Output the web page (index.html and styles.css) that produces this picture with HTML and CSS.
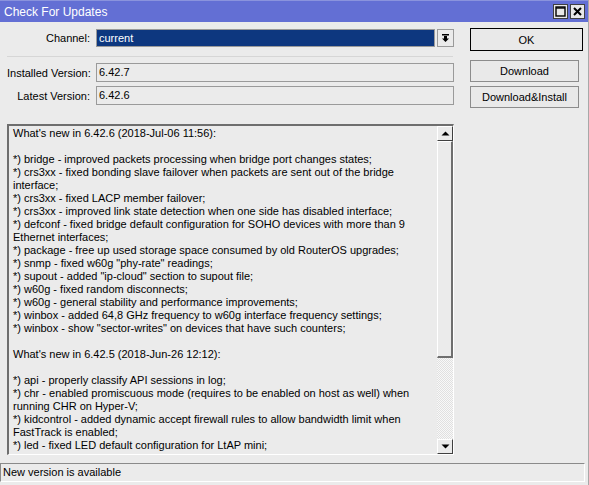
FILE: index.html
```html
<!DOCTYPE html>
<html lang="en">
<head>
    <meta charset="UTF-8">
    <title>Check For Updates</title>
    <link rel="stylesheet" href="styles.css">
</head>
<body>

<div class="window">
    <div class="titlebar">
        <span class="title">Check For Updates</span>
        <div class="title-btns">
            <span class="tbtn">
                <svg width="11" height="11" viewBox="0 0 11 11"><rect x="1" y="1" width="9" height="9" fill="none" stroke="#000" stroke-width="1.4"/><line x1="1" y1="2" x2="10" y2="2" stroke="#000" stroke-width="1.4"/></svg>
            </span>
            <span class="tbtn">
                <svg width="11" height="11" viewBox="0 0 11 11"><path d="M2 2 L9 9 M9 2 L2 9" stroke="#000" stroke-width="2"/></svg>
            </span>
        </div>
    </div>

    <div class="content">
        <div class="left">
            <div class="row channel-row">
                <label class="lbl">Channel:</label>
                <div class="combo">
                    <div class="combo-value">current</div>
                    <div class="combo-btn">
                        <svg width="9" height="9" viewBox="0 0 9 9"><rect x="1" y="0" width="7" height="1.5" fill="#000"/><path d="M3 2 H6 V4.5 H8 L4.5 8 L1 4.5 H3 Z" fill="#000"/></svg>
                    </div>
                </div>
            </div>

            <div class="separator"></div>

            <div class="row version-row">
                <label class="lbl">Installed Version:</label>
                <div class="field">6.42.7</div>
            </div>
            <div class="row version-row latest">
                <label class="lbl">Latest Version:</label>
                <div class="field">6.42.6</div>
            </div>

            <div class="notes">
                <div class="notes-text">
                    <div>What's new in 6.42.6 (2018-Jul-06 11:56):</div>
                    <div>&nbsp;</div>
                    <div>*) bridge - improved packets processing when bridge port changes states;</div>
                    <div>*) crs3xx - fixed bonding slave failover when packets are sent out of the bridge</div>
                    <div>interface;</div>
                    <div>*) crs3xx - fixed LACP member failover;</div>
                    <div>*) crs3xx - improved link state detection when one side has disabled interface;</div>
                    <div>*) defconf - fixed bridge default configuration for SOHO devices with more than 9</div>
                    <div>Ethernet interfaces;</div>
                    <div>*) package - free up used storage space consumed by old RouterOS upgrades;</div>
                    <div>*) snmp - fixed w60g "phy-rate" readings;</div>
                    <div>*) supout - added "ip-cloud" section to supout file;</div>
                    <div>*) w60g - fixed random disconnects;</div>
                    <div>*) w60g - general stability and performance improvements;</div>
                    <div>*) winbox - added 64,8 GHz frequency to w60g interface frequency settings;</div>
                    <div>*) winbox - show "sector-writes" on devices that have such counters;</div>
                    <div>&nbsp;</div>
                    <div>What's new in 6.42.5 (2018-Jun-26 12:12):</div>
                    <div>&nbsp;</div>
                    <div>*) api - properly classify API sessions in log;</div>
                    <div>*) chr - enabled promiscuous mode (requires to be enabled on host as well) when</div>
                    <div>running CHR on Hyper-V;</div>
                    <div>*) kidcontrol - added dynamic accept firewall rules to allow bandwidth limit when</div>
                    <div>FastTrack is enabled;</div>
                    <div>*) led - fixed LED default configuration for LtAP mini;</div>
                </div>
                <div class="scrollbar">
                    <div class="sb-btn">
                        <svg width="9" height="5" viewBox="0 0 9 5"><path d="M0.5 4.5 L4.5 0.5 L8.5 4.5 Z" fill="#000"/></svg>
                    </div>
                    <div class="sb-thumb"></div>
                    <div class="sb-track"></div>
                    <div class="sb-btn">
                        <svg width="9" height="5" viewBox="0 0 9 5"><path d="M0.5 0.5 L8.5 0.5 L4.5 4.5 Z" fill="#000"/></svg>
                    </div>
                </div>
            </div>
        </div>

        <div class="right">
            <button class="btn btn-default">OK</button>
            <button class="btn btn-download">Download</button>
            <button class="btn btn-install">Download&amp;Install</button>
        </div>
    </div>

    <div class="statusbar">New version is available</div>
</div>

</body>
</html>
```

FILE: styles.css
```css
/* Page */
body {
    margin: 0;
    background-color: #ebebeb;
    font-family: "Liberation Sans", Arial, sans-serif;
    font-size: 11px;
    color: #000;
}

.window {
    width: 589px;
    height: 485px;
    position: relative;
    box-sizing: border-box;
    border-right: 1px solid #a8a8a8;
    overflow: hidden;
}

/* Title Bar */
.titlebar {
    height: 22px;
    background-color: #636fd4;
    display: flex;
    align-items: center;
    justify-content: space-between;
    padding: 0 3px 0 4px;
    border-top: 1px solid #8a93dd;
    box-sizing: border-box;
}

.title {
    color: #fff;
    font-size: 12px;
}

.title-btns {
    display: flex;
    gap: 2px;
}

.tbtn {
    width: 15px;
    height: 15px;
    box-sizing: border-box;
    background-color: #e8e8e8;
    border: 1px solid #404040;
    display: flex;
    align-items: center;
    justify-content: center;
}

/* Main Content */
.content {
    display: flex;
    padding: 7px 0 0 7px;
}

.left {
    width: 447px;
}

.row {
    display: flex;
    align-items: center;
}

.lbl {
    width: 83px;
    text-align: right;
    margin-right: 6px;
    white-space: nowrap;
}

/* Channel Combo */
.combo {
    display: flex;
    flex: 1;
    gap: 2px;
}

.combo-value {
    flex: 1;
    height: 18px;
    box-sizing: border-box;
    background-color: #0d377f;
    border: 1px solid #9a9a9a;
    color: #fff;
    padding-left: 2px;
    line-height: 16px;
}

.combo-btn {
    width: 17px;
    height: 18px;
    box-sizing: border-box;
    border: 1px solid #9a9a9a;
    background-color: #ebebeb;
    display: flex;
    align-items: center;
    justify-content: center;
}

.separator {
    height: 1px;
    background-color: #d6d6d6;
    margin: 9px 1px 0 0;
}

/* Version Fields */
.version-row {
    margin-top: 6px;
}

.version-row.latest {
    margin-top: 4px;
}

.field {
    flex: 1;
    height: 19px;
    box-sizing: border-box;
    border: 1px solid #9a9a9a;
    padding-left: 2px;
    line-height: 17px;
}

/* Release Notes */
.notes {
    margin-top: 19px;
    height: 331px;
    box-sizing: border-box;
    border-top: 2px solid #6e6e6e;
    border-left: 2px solid #6e6e6e;
    border-bottom: 1px solid #fff;
    border-right: 1px solid #fff;
    display: flex;
    overflow: hidden;
}

.notes-text {
    flex: 1;
    padding: 1px 0 0 4px;
    line-height: 13px;
    white-space: nowrap;
    overflow: hidden;
}

/* Scrollbar */
.scrollbar {
    width: 16px;
    display: flex;
    flex-direction: column;
}

.sb-btn {
    height: 15px;
    box-sizing: border-box;
    background-color: #ebebeb;
    border-top: 1px solid #fff;
    border-left: 1px solid #fff;
    border-right: 1px solid #404040;
    border-bottom: 1px solid #404040;
    display: flex;
    align-items: center;
    justify-content: center;
}

.sb-thumb {
    height: 217px;
    box-sizing: border-box;
    background-color: #ebebeb;
    border-top: 1px solid #fff;
    border-left: 1px solid #fff;
    border-right: 2px solid #6e6e6e;
    border-bottom: 2px solid #6e6e6e;
}

.sb-track {
    flex: 1;
    background-color: #f4f4f4;
    background-image: repeating-conic-gradient(#e0e0e0 0 25%, #f8f8f8 0 50%);
    background-size: 2px 2px;
}

/* Buttons */
.right {
    display: flex;
    flex-direction: column;
    margin-left: 16px;
    width: 113px;
}

.btn {
    font-family: "Liberation Sans", Arial, sans-serif;
    font-size: 11px;
    color: #000;
    background-color: #e9e9e9;
    border: 1px solid #8c8c8c;
    height: 22px;
    padding: 0;
    width: 109px;
}

.btn-default {
    width: 113px;
    height: 23px;
    border-color: #000;
    margin-top: -1px;
}

.btn-download {
    margin-top: 9px;
}

.btn-install {
    margin-top: 4px;
}

/* Status Bar */
.statusbar {
    position: absolute;
    left: 0;
    top: 463px;
    width: 585px;
    height: 19px;
    box-sizing: border-box;
    border-top: 1px solid #8a8a8a;
    border-left: 1px solid #8a8a8a;
    border-bottom: 1px solid #fff;
    border-right: 1px solid #fff;
    padding-left: 2px;
    line-height: 17px;
}
```
